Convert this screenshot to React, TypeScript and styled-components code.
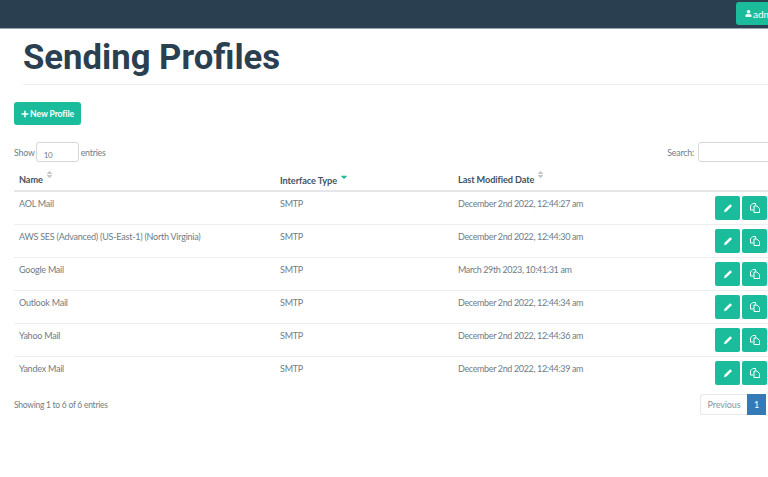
import { FaPlus, FaSort, FaSortDown, FaUser } from "react-icons/fa"
import styled, { createGlobalStyle } from "styled-components"

const profiles = [
  { name: "AOL Mail", date: "December 2nd 2022, 12:44:27 am" },
  { name: "AWS SES (Advanced) (US-East-1) (North Virginia)", date: "December 2nd 2022, 12:44:30 am" },
  { name: "Google Mail", date: "March 29th 2023, 10:41:31 am" },
  { name: "Outlook Mail", date: "December 2nd 2022, 12:44:34 am" },
  { name: "Yahoo Mail", date: "December 2nd 2022, 12:44:36 am" },
  { name: "Yandex Mail", date: "December 2nd 2022, 12:44:39 am" }
]

const PencilIcon = () => (
  <svg width="12" height="12" viewBox="0 0 12 12" fill="#fff">
    <path d="M8.2 2.2 L10 4 L4.4 9.6 L2 10.2 L2.6 7.8 Z" />
  </svg>
)

const FilesIcon = () => (
  <svg width="12" height="12" viewBox="0 0 12 12" fill="none" stroke="#fff" strokeWidth="1">
    <path d="M4.5 8 H1.5 V3.8 L3.8 1.5 H6.6 V3.5" />
    <path d="M5 4 H8 L10.5 6.5 V10.5 H5 Z" />
  </svg>
)

const App = () => (
  <>
    <GlobalStyle />
    <Navbar>
      <AdminButton>
        <FaUser size={7} /> admin
      </AdminButton>
    </Navbar>
    <Main>
      <Title>Sending Profiles</Title>
      <NewButton>
        <FaPlus size={8} /> New Profile
      </NewButton>
      <Controls>
        <Show>
          Show <LengthInput>10</LengthInput> entries
        </Show>
        <Search>
          Search: <SearchInput />
        </Search>
      </Controls>
      <Table>
        <thead>
          <tr>
            <HeadCell $width={261}>
              Name
              <SortIcon>
                <FaSort size={9} />
              </SortIcon>
            </HeadCell>
            <HeadCell $width={178}>
              Interface Type
              <ActiveSort>
                <FaSortDown size={10} />
              </ActiveSort>
            </HeadCell>
            <HeadCell $width={245}>
              Last Modified Date
              <SortIcon>
                <FaSort size={9} />
              </SortIcon>
            </HeadCell>
            <HeadCell $width={70} />
          </tr>
        </thead>
        <tbody>
          {profiles.map((p) => (
            <Row key={p.name}>
              <Cell>{p.name}</Cell>
              <Cell>SMTP</Cell>
              <DateCell>{p.date}</DateCell>
              <ActionCell>
                <Actions>
                  <IconButton>
                    <PencilIcon />
                  </IconButton>
                  <IconButton>
                    <FilesIcon />
                  </IconButton>
                </Actions>
              </ActionCell>
            </Row>
          ))}
        </tbody>
      </Table>
      <Footer>
        <span>Showing 1 to 6 of 6 entries</span>
        <Pagination>
          <PrevPage>Previous</PrevPage>
          <CurrentPage>1</CurrentPage>
        </Pagination>
      </Footer>
    </Main>
  </>
)

const GlobalStyle = createGlobalStyle`
  html, body {
    margin: 0;
    overflow: hidden;
    background: #fff;
    height: 477px;
  }
  body {
    font-family: "Lato", "Open Sans", sans-serif;
    font-size: 9px;
    letter-spacing: -0.24px;
    color: #707c86;
  }
`

const Navbar = styled.header`
  display: flex;
  justify-content: flex-start;
  box-sizing: border-box;
  width: 800px;
  height: 29px;
  padding: 2px 0 0 736px;
  background: #2a3f50;
  border-bottom: 1px solid #9aa5ae;
`

const AdminButton = styled.div`
  display: flex;
  align-items: center;
  gap: 1px;
  box-sizing: border-box;
  width: 60px;
  height: 23px;
  padding-left: 9px;
  flex: none;
  border-radius: 3px;
  background: #1abc9c;
  color: #fff;
  font-size: 10px;
  letter-spacing: 0;
`

const Main = styled.main`
  display: flex;
  flex-direction: column;
  width: 768px;
  box-sizing: border-box;
  padding-left: 14px;
`

const Title = styled.h1`
  margin: 0 0 17px 9px;
  height: 55px;
  line-height: 56px;
  border-bottom: 1px solid #eee;
  font-family: "Roboto", sans-serif;
  font-size: 34.7px;
  font-weight: 700;
  letter-spacing: 0;
  color: #2a3f50;
`

const NewButton = styled.div`
  display: flex;
  align-items: center;
  justify-content: center;
  gap: 1px;
  width: 67px;
  height: 23px;
  border-radius: 3px;
  background: #1abc9c;
  color: #fff;
  font-size: 8.6px;
  font-weight: 700;
  letter-spacing: -0.1px;
`

const Controls = styled.div`
  display: flex;
  justify-content: space-between;
  align-items: center;
  margin-top: 17px;
  height: 20px;
  font-size: 8.8px;
  letter-spacing: -0.2px;
`

const Show = styled.div`
  display: flex;
  align-items: center;
`

const LengthInput = styled.div`
  box-sizing: border-box;
  width: 43px;
  height: 20px;
  margin: 0 2px 0 1px;
  padding: 7px 0 0 7px;
  border: 1px solid #d5d9dc;
  border-radius: 3px;
  font-size: 8px;
`

const Search = styled.div`
  display: flex;
  align-items: center;
  gap: 4px;
  margin-right: -3px;
`

const SearchInput = styled.div`
  box-sizing: border-box;
  width: 73px;
  height: 20px;
  border: 1px solid #d5d9dc;
  border-radius: 3px;
`

const Table = styled.table`
  width: 754px;
  margin-top: 7px;
  border-collapse: collapse;
  table-layout: fixed;
`

const HeadCell = styled.th<{ $width: number }>`
  box-sizing: border-box;
  height: 22px;
  padding: 0 0 0 5px;
  width: ${({ $width }) => $width}px;
  border-bottom: 2px solid #e4e6e8;
  text-align: left;
  vertical-align: middle;
  font-size: 9.2px;
  font-weight: 700;
  letter-spacing: -0.1px;
  color: #44535f;
`

const SortIcon = styled.span`
  position: relative;
  top: -4px;
  margin-left: 2px;
  color: #c3c8cc;
`

const ActiveSort = styled.span`
  position: relative;
  top: -4px;
  margin-left: 2px;
  color: #1abc9c;
`

const Row = styled.tr`
  height: 33px;
  border-bottom: 1px solid #eceeef;

  &:last-child {
    border-bottom: none;
  }
`

const Cell = styled.td`
  padding: 5px 0 0 5px;
  vertical-align: top;
  line-height: 13px;
  white-space: nowrap;
`

const DateCell = styled(Cell)`
  letter-spacing: -0.36px;
`

const ActionCell = styled.td`
  padding: 0;
  vertical-align: middle;
`

const Actions = styled.div`
  display: flex;
  justify-content: flex-end;
  gap: 2px;
  padding-right: 1px;
`

const IconButton = styled.div`
  display: flex;
  align-items: center;
  justify-content: center;
  width: 25px;
  height: 24px;
  border-radius: 2px;
  background: #1abc9c;
`

const Footer = styled.div`
  display: flex;
  justify-content: space-between;
  align-items: center;
  margin-top: 5px;
  height: 21px;
  font-size: 8.5px;
  letter-spacing: -0.26px;
`

const Pagination = styled.div`
  display: flex;
  margin-right: 2px;
`

const PrevPage = styled.div`
  display: flex;
  align-items: center;
  justify-content: center;
  box-sizing: border-box;
  width: 47px;
  height: 21px;
  border: 1px solid #e6e8ea;
  border-right: none;
  border-radius: 3px 0 0 3px;
  font-size: 9px;
  letter-spacing: -0.1px;
  color: #8a96a0;
`

const CurrentPage = styled.div`
  display: flex;
  align-items: center;
  justify-content: center;
  width: 19px;
  height: 21px;
  background: #337ab7;
  color: #fff;
  font-size: 9px;
`

export default App
